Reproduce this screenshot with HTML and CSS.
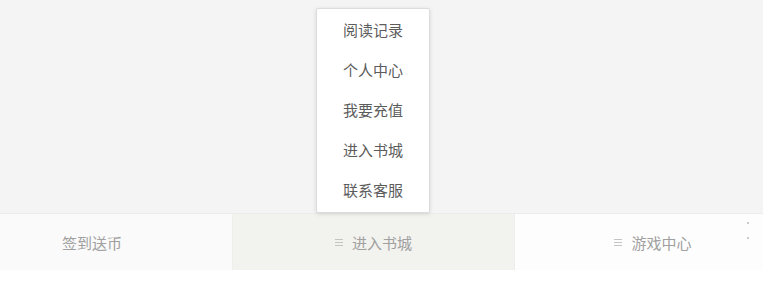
FILE: index.html
```html
<!DOCTYPE html>
<html lang="zh-CN">
<head>
  <meta charset="UTF-8" />
  <meta name="viewport" content="width=device-width, initial-scale=1" />
  <title>书城</title>
  <link rel="stylesheet" href="styles.css">
</head>
<body>
  <div class="page">
    <div class="stage"></div>

    <nav class="tabbar">
      <a class="tab tab-sign">签到送币</a>
      <a class="tab tab-mall active"><span class="burger"><i></i><i></i><i></i></span>进入书城</a>
      <a class="tab tab-game"><span class="burger"><i></i><i></i><i></i></span>游戏中心</a>
      <span class="dots"><i></i><i></i></span>
    </nav>

    <ul class="popmenu">
      <li>阅读记录</li>
      <li>个人中心</li>
      <li>我要充值</li>
      <li>进入书城</li>
      <li>联系客服</li>
    </ul>
  </div>
</body>
</html>
```

FILE: styles.css
```css
body { margin: 0; font-family: "Noto Sans CJK SC", "Liberation Sans", sans-serif; background: #fff; }
.page { position: relative; width: 763px; height: 284px; overflow: hidden; }
.stage { height: 214px; background: #f4f4f4; border-bottom: 1px solid #ececec; box-sizing: border-box; }

.tabbar {
  display: grid; grid-template-columns: 232px 283px 1fr;
  height: 56px; position: relative;
}
.tab {
  display: flex; align-items: center; justify-content: center;
  font-size: 15px; color: #a0a0a0; text-decoration: none;
}
.tab-sign { background: #fafafa; padding-right: 48px; }
.tab-mall { background: #f2f2ee; border-left: 1px solid #eeeeea; border-right: 1px solid #eeeeea; }
.tab-game { background: #fdfdfd; padding-left: 28px; }

.burger { display: flex; flex-direction: column; gap: 2px; width: 8px; margin-right: 9px; }
.burger i { display: block; height: 1px; background: #c4c4c4; }

.dots { position: absolute; right: 14px; top: 8px; display: flex; flex-direction: column; gap: 13px; }
.dots i { display: block; width: 2px; height: 2px; border-radius: 50%; background: #bbb; }

.popmenu {
  position: absolute; left: 316px; top: 8px; width: 114px;
  margin: 0; padding: 1px 0 2px; list-style: none;
  background: #fff; border: 1px solid #dcdcdc; border-radius: 2px;
  box-shadow: 0 1px 4px rgba(0, 0, 0, 0.12);
  box-sizing: border-box;
}
.popmenu li {
  height: 40px; line-height: 40px; text-align: center;
  font-size: 15px; color: #5c5c5c;
}
```
